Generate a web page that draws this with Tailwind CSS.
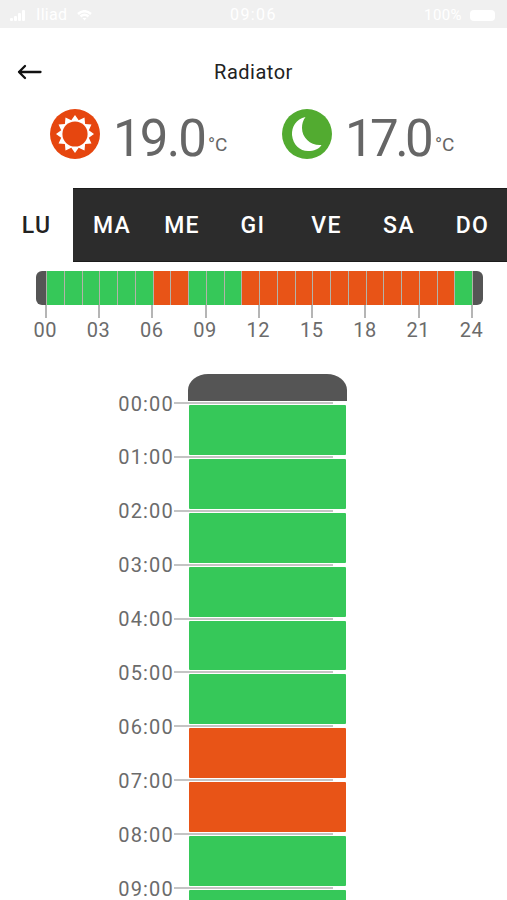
<!DOCTYPE html>
<html lang="it">
<head>
    <meta charset="UTF-8">
    <meta name="viewport" content="width=device-width, initial-scale=1.0">
    <title>Radiator</title>
    <script src="https://cdn.jsdelivr.net/npm/@tailwindcss/browser@4"></script>
</head>
<body class="bg-white font-['Roboto',sans-serif] h-[900px] overflow-hidden">

    <!-- Status bar -->
    <div class="h-7 bg-[#f0f0f0] text-white text-[16px] tracking-[1.4px] grid grid-cols-3 items-center pl-[10px] pr-3 pt-[2px]">
        <div class="flex items-center gap-[10px] tracking-[0.3px]">
            <svg class="w-4 h-[11px]" viewBox="0 0 16 11" fill="currentColor">
                <rect x="0" y="8" width="3" height="3" rx="1"/>
                <rect x="4" y="6" width="3" height="5" rx="1"/>
                <rect x="8" y="3" width="3" height="8" rx="1"/>
                <rect x="12" y="0" width="3" height="11" rx="1"/>
            </svg>
            <span>Iliad</span>
            <svg class="w-[15px] h-[11px]" viewBox="0 0 15 11" fill="none" stroke="currentColor" stroke-width="2.5">
                <path d="M1 4 Q7.5 -1.5 14 4"/>
                <path d="M3.5 6.5 Q7.5 3 11.5 6.5"/>
                <path d="M5.5 8 L7.5 10.5 L9.5 8 Z" fill="currentColor" stroke="none"/>
            </svg>
        </div>
        <div class="text-center pl-[2px]">09:06</div>
        <div class="flex items-center justify-end gap-2">
            <span class="tracking-[0.4px] text-[15px]">100%</span>
            <span class="w-[25px] h-[11px] rounded-[4px] bg-white"></span>
        </div>
    </div>

    <!-- Title bar -->
    <div class="h-[79px] grid grid-cols-3 items-center pb-[5px] pt-[13px]">
        <svg class="ml-[17px] w-[25px] h-[16px]" viewBox="0 0 25 16" fill="none" stroke="#111111" stroke-width="2.3" stroke-linecap="round" stroke-linejoin="round">
            <path d="M23.5 8 H2 M8 2 L2 8 L8 14"/>
        </svg>
        <h1 class="text-center text-[20px] leading-6 text-[#222222] tracking-[0.5px]">Radiator</h1>
    </div>

    <!-- Comfort and night temperatures -->
    <div class="h-[81px] flex text-[#666666]">
        <div class="w-[232px] pl-[50px] flex">
            <svg class="w-[50px] h-[50px] mt-[2px]" viewBox="-25 -25 50 50">
                <circle r="25" fill="#e6460f"/>
                <polygon id="rays" fill="white"/>
                <circle r="12.6" fill="#e6460f"/>
            </svg>
            <span class="w-[94px] ml-[13px] mt-[3px] text-[51px] leading-[58px] tracking-[-1.8px]">19.0</span>
            <span class="ml-[1px] mt-[26px] text-[19px] leading-6">°C</span>
        </div>
        <div class="pl-[50px] flex">
            <svg class="w-[50px] h-[50px] mt-[2px]" viewBox="-25 -25 50 50">
                <circle r="25" fill="#52ab30"/>
                <path d="M-1.500 -17 C-11 -15 -15.500 -7 -15 1 C-14 11 -7 17 1 17 C7 17 12 15 14.500 11 C4 12 -5 4 -5 -6 C-5 -10 -4 -14 -1.500 -17 Z" fill="white"/>
            </svg>
            <span class="w-[89px] ml-[13px] mt-[3px] text-[51px] leading-[58px] tracking-[-3.6px]">17.0</span>
            <span class="ml-[1px] mt-[26px] text-[19px] leading-6">°C</span>
        </div>
    </div>

    <!-- Days -->
    <div class="h-[74px] flex text-[23px] font-medium tracking-[1.3px] text-white">
        <div class="w-[73px] flex items-center justify-center pt-[2px] text-[#222222]">LU</div>
        <div class="flex-1 grid grid-cols-[78px_62px_80px_67px_78px_69px] items-center text-center pt-[2px] bg-[#2c2c2c] border-y border-[#1c1c1c]">
            <div>MA</div>
            <div>ME</div>
            <div>GI</div>
            <div>VE</div>
            <div>SA</div>
            <div>DO</div>
        </div>
    </div>

    <!-- Day overview -->
    <div class="mt-[9px] ml-9 w-[447px] h-[34px] flex">
        <div class="w-[10px] bg-[#555555] rounded-l-[6px]"></div>
        <div id="overview" class="flex-1 grid grid-cols-24 border-r border-[#b3b3a9]"></div>
        <div class="w-[10px] bg-[#555555] rounded-r-[6px]"></div>
    </div>
    <div id="scale" class="ml-[19px] flex text-[20px] leading-6 tracking-[0.5px] text-[#6b6b6b]"></div>

    <!-- Hour list -->
    <div class="mt-[32px] ml-[188px] w-[159px] h-[27px] bg-[#555555] rounded-t-[20px_16px]"></div>
    <div id="hours"></div>

    <script>
        // Hours of the day that are set to the comfort temperature
        const isWarm = h => (h >= 6 && h < 8) || (h >= 11 && h < 23);
        const pad = h => String(h).padStart(2, '0');

        // Sun rays
        const points = [];
        for (let i = 0; i < 24; i++) {
            const r = i % 2 ? 14.3 : 19;
            const a = i * Math.PI / 12;
            points.push((r * Math.sin(a)).toFixed(2) + ',' + (-r * Math.cos(a)).toFixed(2));
        }
        document.getElementById('rays').setAttribute('points', points.join(' '));

        const overview = document.getElementById('overview');
        for (let h = 0; h < 24; h++) {
            const cell = document.createElement('div');
            cell.className = 'border-l border-[#b3b3a9] ' + (isWarm(h) ? 'bg-[#e85417]' : 'bg-[#36c859]');
            overview.appendChild(cell);
        }

        const scale = document.getElementById('scale');
        for (let h = 0; h <= 24; h += 3) {
            const mark = document.createElement('div');
            mark.className = 'w-[53.3px] shrink-0 flex flex-col items-center';
            mark.innerHTML = `<div class="w-[2px] h-[13px] bg-[#b5b5b5]"></div><div class="-ml-[1px]">${pad(h)}</div>`;
            scale.appendChild(mark);
        }

        const hours = document.getElementById('hours');
        for (let h = 0; h < 10; h++) {
            const row = document.createElement('div');
            row.className = 'relative h-[53.9px] pl-[189px] pt-[4px]';
            row.innerHTML = `
                <div class="w-[157px] h-full rounded-[1px] ${isWarm(h) ? 'bg-[#e85417]' : 'bg-[#36c859]'}"></div>
                <div class="absolute left-[174px] top-[1px] w-[159px] h-[2px] bg-[#c4c4c4]"></div>
                <div class="absolute right-[333px] top-[-9.5px] text-[20px] leading-6 tracking-[1.2px] text-[#6b6b6b]">${pad(h)}:00</div>`;
            hours.appendChild(row);
        }
    </script>

</body>
</html>
